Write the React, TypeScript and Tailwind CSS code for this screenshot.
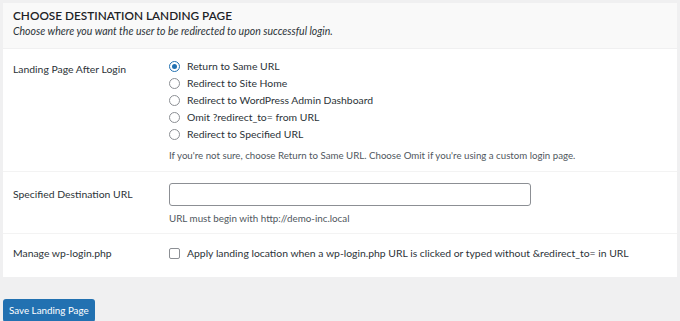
import React from "react";

function Radio({ checked, label }: { checked?: boolean; label: string }) {
  return (
    <label className="flex items-center gap-[7px] h-[17px]">
      <span
        className={
          "w-[11px] h-[11px] rounded-full border flex items-center justify-center bg-white " +
          (checked ? "border-[#2271b1]" : "border-[#8c8f94]")
        }
      >
        {checked && <span className="w-[5px] h-[5px] rounded-full bg-[#2271b1]" />}
      </span>
      <span className="text-[10.4px] text-[#2c3338]">{label}</span>
    </label>
  );
}

export default function App() {
  return (
    <div className="w-[680px] h-[321px] bg-[#f0f0f1] overflow-hidden font-['Lato'] text-[#1d2327]">
      <div className="px-[3px] pt-[3px]">
        <div className="bg-[#f9f9f9] px-[10px] pt-[4px] pb-[9px]">
          <h2 className="text-[11.8px] font-semibold leading-[17px] text-[#1d2327]">
            CHOOSE DESTINATION LANDING PAGE
          </h2>
          <p className="text-[10.5px] italic leading-[15px] text-[#2c3338]">
            Choose where you want the user to be redirected to upon successful login.
          </p>
        </div>
        <div className="bg-white mt-[1px]">
          <div className="flex pt-[9px] pb-[9px] border-b border-[#f3f3f3]">
            <div className="w-[166px] pl-[10px] pt-[4px] text-[10.4px] leading-[15px] text-[#2c3338]">
              Landing Page After Login
            </div>
            <div className="flex flex-col">
              <Radio checked label="Return to Same URL" />
              <Radio label="Redirect to Site Home" />
              <Radio label="Redirect to WordPress Admin Dashboard" />
              <Radio label="Omit ?redirect_to= from URL" />
              <Radio label="Redirect to Specified URL" />
              <p className="text-[9.7px] leading-[13px] text-[#50575e] mt-[6px]">
                If you're not sure, choose Return to Same URL. Choose Omit if you're using a custom login page.
              </p>
            </div>
          </div>
          <div className="flex pt-[11px] pb-[8px] border-b border-[#f3f3f3]">
            <div className="w-[166px] pl-[10px] pt-[4px] text-[10.4px] leading-[15px] text-[#2c3338]">
              Specified Destination URL
            </div>
            <div className="flex flex-col">
              <div className="w-[362px] h-[23px] border border-[#8c8f94] rounded-[3px] bg-white" />
              <p className="text-[9.8px] leading-[13px] text-[#50575e] mt-[6px]">URL must begin with http://demo-inc.local</p>
            </div>
          </div>
          <div className="flex pt-[12px] pb-[16px]">
            <div className="w-[166px] pl-[10px] text-[10.4px] leading-[15px] text-[#2c3338]">Manage wp-login.php</div>
            <label className="flex items-center gap-[7px] h-[15px]">
              <span className="w-[11px] h-[11px] border border-[#8c8f94] rounded-[2px] bg-white" />
              <span className="text-[10.4px] text-[#2c3338]">
                Apply landing location when a wp-login.php URL is clicked or typed without &amp;redirect_to= in URL
              </span>
            </label>
          </div>
        </div>
        <button className="mt-[22px] h-[23px] px-[6px] bg-[#2271b1] text-white text-[9.8px] rounded-[3px]">
          Save Landing Page
        </button>
      </div>
    </div>
  );
}
